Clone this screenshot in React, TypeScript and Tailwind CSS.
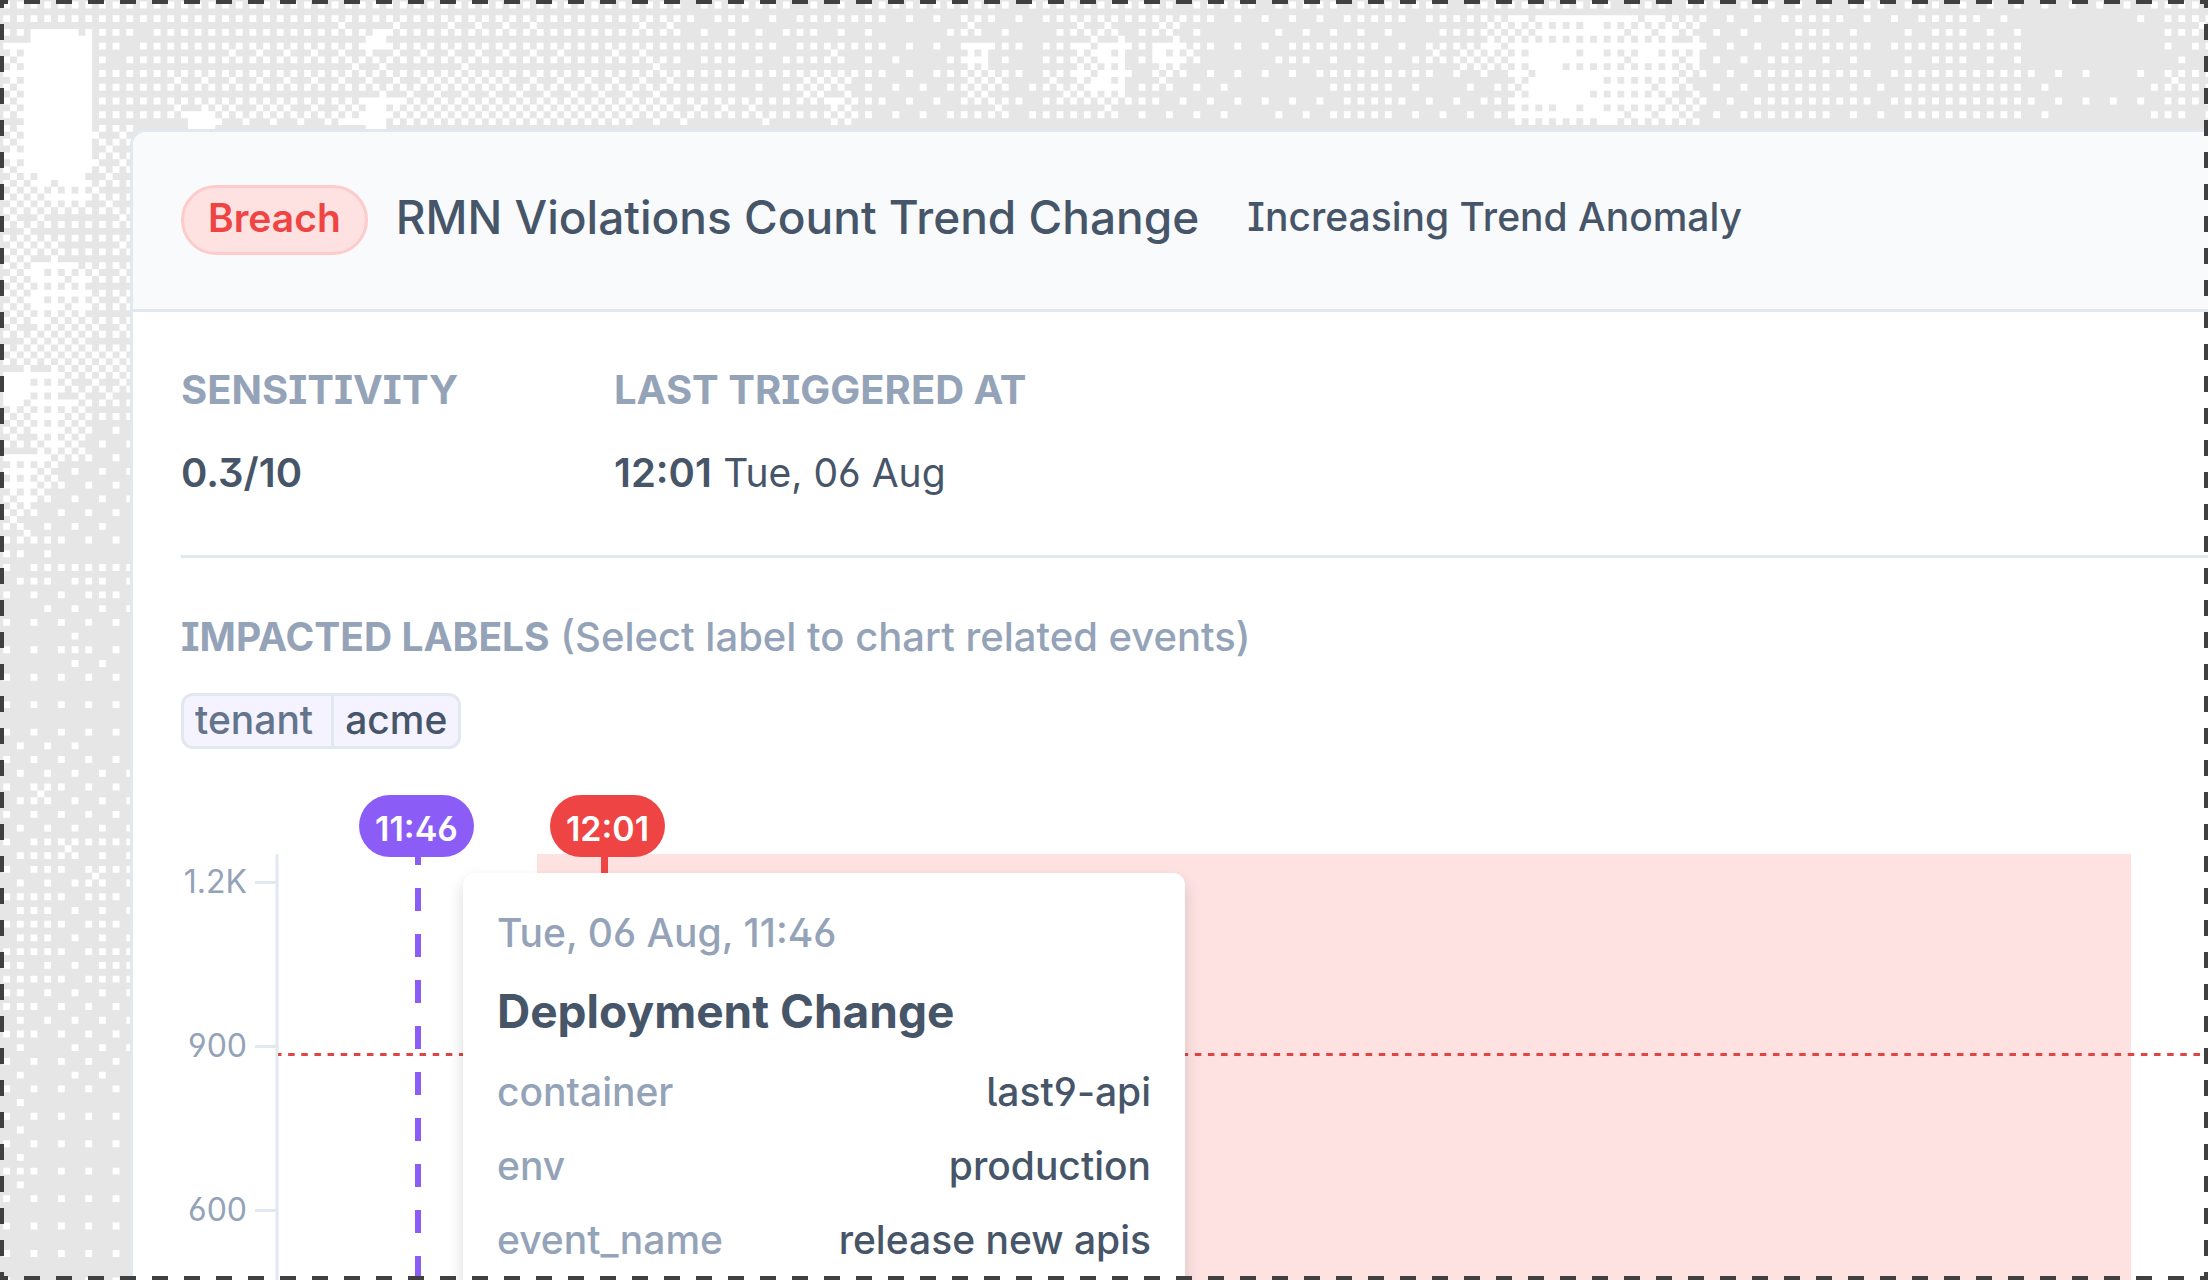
import React, { useMemo, useState } from 'react';

// Brightness of the dithered backdrop, one hex digit per 4x4 block of cells.
// The first rows cover the full width, the rest only run down the left gutter.
const DENSITY = [
  '444444444444444444444444434' + '443334444434444434434434443' + '444443434343334343333333344',
  '44444344444454545555444' + '5523' + '224331125213663731122233134' + '89ccdaa72213421234220000145',
  'a44424445555665565555456434' + '32453212c3149d3d51124332258' + '9cfddbdb2224331334330000023',
  'a44444555555566777666666544' + '338732238526ad2522111344312' + '2affdcb62234432344442110254',
  '6444446867668698888888' + '87655' + '644942224524453222122244222' + '3ccdeba82244432344442111243',
  '84465', 'a4465', '8ac64', '65445', '87446', '8da56', '8db55', '69855',
  '77888', 'fc666', '9c944', '5b822', 'c9322', 'b5222', '62221', '43111',
  '24343', '12232', '11211', '11321', '11111', '11111', '22211', '22222',
  '25222', '22222', '24533', '23253', '34232', '34232', '43234', '43233',
  '32222', '31222', '21221', '21111', '21111', '21111', '31111', '11111',
  '11111', '11111', '11111',
];

const BAYER = [
  [0, 8, 2, 10],
  [12, 4, 14, 6],
  [3, 11, 1, 9],
  [15, 7, 13, 5],
];

// Solid areas that sit on top of the dither, in cells
const SOLID = 'M4 6h7v1h2v20h-1v1h-7v-1h-1v-2h-1v-17h1zM27 18h4v3h-4zM54 6h2v3h-3v-2h1zM53 16h3v5h-3zM50 19h3v1h-3z';

const buildDither = () => {
  let d = SOLID;
  DENSITY.forEach((line, by) => {
    line.split('').forEach((digit, bx) => {
      const level = digit === 'f' ? 16 : parseInt(digit, 16);
      BAYER.forEach((row, y) => {
        row.forEach((threshold, x) => {
          if (threshold < level) {
            d += `M${bx * 4 + x} ${by * 4 + y}h1v1h-1z`;
          }
        });
      });
    });
  });
  return d;
};

function Backdrop() {
  const path = useMemo(buildDither, []);
  return (
    <svg className="absolute inset-0 w-full h-full" aria-hidden="true">
      <path d={path} fill="#fff" transform="translate(3.2 -12.2) scale(6.84 6.86)" />
    </svg>
  );
}

function DashedFrame() {
  return (
    <svg className="absolute inset-0 w-full h-full pointer-events-none" aria-hidden="true">
      <rect
        width="100%"
        height="100%"
        fill="none"
        stroke="#404040"
        strokeWidth="8"
        strokeDasharray="16 16"
        strokeDashoffset="8"
      />
    </svg>
  );
}

const ticks = ['1.2K', '900', '600'];

const eventLabels = [
  { name: 'container', value: 'last9-api', isId: true },
  { name: 'env', value: 'production' },
  { name: 'event_name', value: 'release new apis' },
];

function EventTooltip() {
  return (
    <div className="absolute left-[282px] top-[78px] w-[722px] rounded-xl bg-white px-[34px] pt-8 pb-10 text-[39px] shadow-[0_8px_16px_rgba(0,0,0,0.15)]">
      <p className="font-medium leading-[56px] text-[#94a3b8]">Tue, 06 Aug, 11:46</p>
      <h2 className="mt-[18px] text-[46px] leading-[64px] font-bold text-[#475569]">Deployment Change</h2>
      <dl className="mt-3">
        {eventLabels.map((label) => (
          <div key={label.name} className="flex justify-between font-medium leading-[74px]">
            <dt className="text-[#94a3b8]">{label.name}</dt>
            <dd
              className={
                label.isId
                  ? "text-[#475569] [font-feature-settings:'cv04','cv05']"
                  : 'text-[#475569]'
              }
            >
              {label.value}
            </dd>
          </div>
        ))}
      </dl>
    </div>
  );
}

function TrendChart() {
  return (
    <div className="relative mt-[46px] pt-[59px] flex">
      <ul className="w-[66px] flex flex-col gap-[108px] text-right text-[32px] leading-[56px] text-[#94a3b8]">
        {ticks.map((tick) => (
          <li key={tick}>{tick}</li>
        ))}
      </ul>
      <svg className="ml-2 flex-1 h-[640px]">
        <rect x="282" y="0" height="640" fill="#fee2e2" className="w-[calc(100%-359px)]" />
        <path d="M0 28.5h21M0 192.5h21M0 356.5h21" stroke="#e2e8f0" strokeWidth="3" />
        <path d="M22 0v640" stroke="#e2e8f0" strokeWidth="3" />
        <path d="M163 -12v652" stroke="#8b5cf6" strokeWidth="6" strokeDasharray="23 23" />
        <path d="M349.500 0v40" stroke="#ef4444" strokeWidth="7" />
        <line x1="23" x2="100%" y1="200.500" y2="200.500" stroke="#dc4646" strokeWidth="3" strokeDasharray="6.500 6.640" strokeDashoffset="3" />
      </svg>
      <span className="absolute left-[178px] top-0 w-[115px] h-[62px] pt-1 rounded-full bg-[#8b5cf6] text-center text-[34px] leading-[60px] font-semibold text-white">
        11:46
      </span>
      <span className="absolute left-[369px] top-0 w-[115px] h-[62px] pt-1 rounded-full bg-[#ef4444] text-center text-[34px] leading-[60px] font-semibold text-white">
        12:01
      </span>
      <EventTooltip />
    </div>
  );
}

function App() {
  const [selected, setSelected] = useState(true);

  return (
    <div className="relative h-screen overflow-hidden bg-[#e6e6e6] pl-[130px] pt-[129px] font-['Inter',sans-serif] text-[40px] [font-feature-settings:'cv02','cv03','cv04','cv08','cv09']">
      <Backdrop />
      <main className="relative bg-white border-t-3 border-l-3 border-[#e2e8f0] rounded-tl-2xl overflow-hidden">
        <header className="h-[180px] pl-12 pb-[2px] flex items-center border-b-3 border-[#e2e8f0] bg-[#f8fafc] font-medium text-[#475569]">
          <span className="h-[70px] px-6 pb-[2px] flex items-center rounded-full border-3 border-[#fecaca] bg-[#fee2e2] text-[39px] font-semibold text-[#ef4444]">
            Breach
          </span>
          <h1 className="ml-7 pb-1 text-[46px]">RMN Violations Count Trend Change</h1>
          <p className="ml-12 pb-1 text-[39px]">Increasing Trend Anomaly</p>
        </header>

        <div className="pl-12">
          <dl className="flex h-[246px] pt-[50px] border-b-3 border-[#e2e8f0] leading-[56px]">
            <div className="w-[433px]">
              <dt className="font-bold text-[#94a3b8]">SENSITIVITY</dt>
              <dd className="mt-[27px] font-semibold text-[#475569]">0.3/10</dd>
            </div>
            <div>
              <dt className="font-bold text-[#94a3b8]">LAST TRIGGERED AT</dt>
              <dd className="mt-[27px] text-[#475569]">
                <span className="font-semibold">12:01</span> <span className="text-[39px]">Tue, 06 Aug</span>
              </dd>
            </div>
          </dl>

          <p className="mt-[51px] leading-[56px] font-medium text-[#94a3b8]">
            <span className="text-[39px] font-bold">IMPACTED LABELS</span> (Select label to chart related events)
          </p>
          <button
            type="button"
            aria-pressed={selected}
            onClick={() => setSelected(!selected)}
            className="mt-7 h-14 flex items-stretch rounded-xl border-3 border-[#e2e8f0] bg-[#f5f3ff] text-[39px] leading-[48px] font-medium overflow-hidden"
          >
            <span className="pl-[11px] pr-[18px] text-[#64748b]">tenant</span>
            <span className="px-[11px] border-l-3 border-[#e2e8f0] text-[#475569]">acme</span>
          </button>

          <TrendChart />
        </div>
      </main>
      <DashedFrame />
    </div>
  );
}

export default App;
